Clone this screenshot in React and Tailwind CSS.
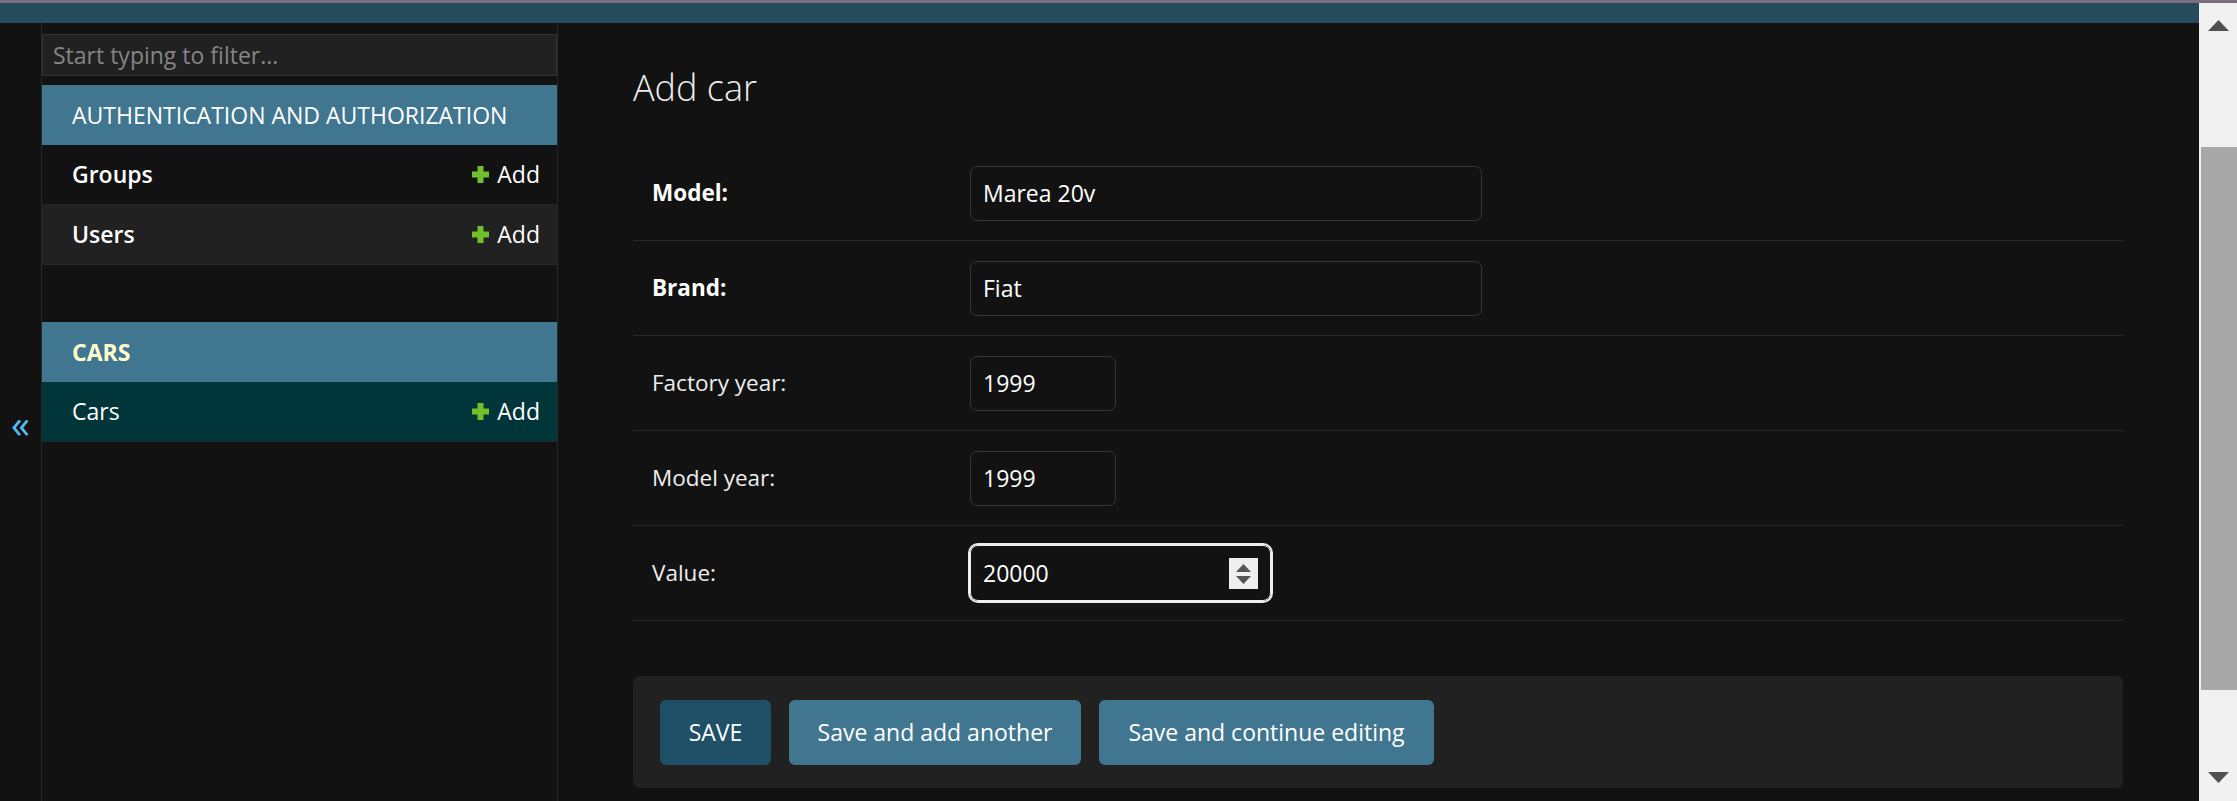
import { useState } from 'react';

const font = "font-['Segoe_UI','Open_Sans',sans-serif]";

function PlusIcon() {
  return (
    <svg width="19" height="19" viewBox="0 0 19 19" className="shrink-0">
      <path d="M6.5 1h6v5.5H18v6h-5.5V18h-6v-5.5H1v-6h5.5z" fill="#70bf2b" />
    </svg>
  );
}

function SidebarRow({ name, bg = 'bg-[#121212]', bold = true }) {
  return (
    <div className={`h-[60px] flex items-center justify-between pl-[30px] pr-[17px] border-b border-[#272727] ${bg}`}>
      <span className={`text-[23px] text-white ${bold ? 'font-semibold' : 'font-normal'}`}>{name}</span>
      <span className="flex items-center gap-[7px] text-[23px] text-white">
        <PlusIcon />
        Add
      </span>
    </div>
  );
}

function Caption({ children, className = '' }) {
  return (
    <div className={`h-[60px] flex items-center pl-[30px] bg-[#417690] text-[23px] ${className}`}>
      {children}
    </div>
  );
}

function Sidebar() {
  const [filter, setFilter] = useState('');
  return (
    <nav className="w-[516px] shrink-0 border-r border-[#272727] pt-[11px] flex flex-col">
      <input
        value={filter}
        onChange={e => setFilter(e.target.value)}
        placeholder="Start typing to filter..."
        className="h-[42px] w-full bg-[#212121] border border-[#333333] pl-[10px] text-[23px] text-white placeholder:text-[#858585] outline-none"
      />
      <div className="mt-[9px]">
        <Caption className="text-white">AUTHENTICATION AND AUTHORIZATION</Caption>
        <SidebarRow name="Groups" />
        <SidebarRow name="Users" bg="bg-[#212121]" />
      </div>
      <div className="mt-[57px]">
        <Caption className="text-[#ffffcc] font-bold">CARS</Caption>
        <SidebarRow name="Cars" bg="bg-[#00363a]" bold={false} />
      </div>
    </nav>
  );
}

function Field({ label, value, bold, width, focused }) {
  return (
    <div className="h-[95px] flex items-center pl-[19px] border-b border-[#272727]">
      <label className={`w-[318px] shrink-0 text-[22.5px] ${bold ? 'font-bold text-white' : 'text-[#eeeeee]'}`}>{label}</label>
      {focused ? (
        <div className={`${width} h-[56px] flex items-center justify-between pl-[12px] pr-[12px] rounded-[8px] border border-[#eeeeee] outline-2 outline-[#eeeeee]`}>
          <span className="text-[23px] text-white">{value}</span>
          <svg width="29" height="31" viewBox="0 0 29 31">
            <rect width="29" height="31" fill="#efefef" />
            <path d="M7 14h15l-7.5-8z" fill="#555555" />
            <path d="M7 18h15l-7.5 8z" fill="#555555" />
          </svg>
        </div>
      ) : (
        <div className={`${width} h-[55px] flex items-center pl-[12px] rounded-[7px] border border-[#353535]`}>
          <span className="text-[23px] text-white">{value}</span>
        </div>
      )}
    </div>
  );
}

function SubmitRow() {
  return (
    <div className="mt-[55px] h-[112px] rounded-[7px] bg-[#212121] flex items-center gap-[18px] pl-[27px]">
      <button className="w-[111px] h-[65px] rounded-[6px] bg-[#205067] text-white text-[23px]">SAVE</button>
      <button className="w-[292px] h-[65px] rounded-[6px] bg-[#417690] text-white text-[23px]">Save and add another</button>
      <button className="w-[335px] h-[65px] rounded-[6px] bg-[#417690] text-white text-[23px]">Save and continue editing</button>
    </div>
  );
}

function Scrollbar() {
  return (
    <div className="w-[38px] shrink-0 bg-[#f1f1f1] flex flex-col">
      <div className="h-[44px] flex items-center justify-center">
        <svg width="21" height="11" viewBox="0 0 21 11"><path d="M0 11h21L10.5 0z" fill="#505050" /></svg>
      </div>
      <div className="mt-[100px] ml-[2px] h-[543px] bg-[#a8a8a8]" />
      <div className="flex-1 flex items-end justify-center pb-[18px]">
        <svg width="21" height="11" viewBox="0 0 21 11"><path d="M0 0h21L10.5 11z" fill="#505050" /></svg>
      </div>
    </div>
  );
}

export default function App() {
  return (
    <div className={`h-[801px] overflow-hidden flex flex-col bg-[#121212] ${font}`}>
      <div className="h-[3px] bg-[#7b6e7f] shrink-0" />
      <div className="flex flex-1 min-h-0">
        <div className="flex-1 min-w-0 flex flex-col">
          <div className="h-[20px] bg-[#264b5d] shrink-0" />
          <div className="flex flex-1 min-h-0">
            <div className="w-[42px] shrink-0 border-r border-[#272727] flex items-center justify-center pt-[22px]">
              <span className="text-[38px] leading-none text-[#56bdf5]">«</span>
            </div>
            <Sidebar />
            <main className="flex-1 min-w-0 pl-[75px] pr-[76px]">
              <h1 className="mt-[43px] mb-[36px] leading-[44px] text-[36px] font-light text-[#eeeeee]">Add car</h1>
              <Field label="Model:" value="Marea 20v" bold width="w-[512px]" />
              <Field label="Brand:" value="Fiat" bold width="w-[512px]" />
              <Field label="Factory year:" value="1999" width="w-[146px]" />
              <Field label="Model year:" value="1999" width="w-[146px]" />
              <Field label="Value:" value="20000" width="w-[301px]" focused />
              <SubmitRow />
            </main>
          </div>
        </div>
        <Scrollbar />
      </div>
    </div>
  );
}
